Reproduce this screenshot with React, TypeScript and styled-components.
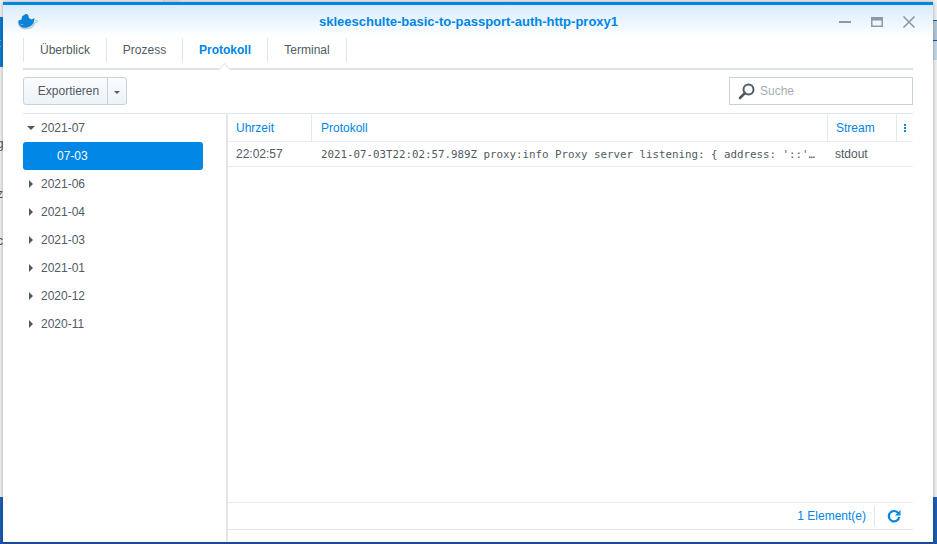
import styled, { createGlobalStyle } from "styled-components";

const GlobalStyle = createGlobalStyle`
  html, body {
    margin: 0;
    padding: 0;
    width: 937px;
    height: 544px;
    overflow: hidden;
    font-family: "Liberation Sans", Arial, sans-serif;
  }
`;

const Desktop = styled.div`
  width: 937px;
  height: 544px;
  box-sizing: border-box;
  padding: 2px 4px 2px 3px;
  position: relative;
  overflow: hidden;
  background:
    linear-gradient(#0a7bd2, #0a7bd2) 0 17px / 3px 50px no-repeat,
    linear-gradient(#1e5f9e 0 1px, #b4c8d8 1px 20px, #164f8a 20px 21px, #c4d8e6 21px 40px) 933px 20px / 4px 40px no-repeat,
    linear-gradient(#d8d8d8, #d8d8d8) 163px 0 / 1px 2px no-repeat,
    linear-gradient(#e8e8e8, #e8e8e8) 164px 0 / 16px 2px no-repeat,
    linear-gradient(#f1f1f1 0, #f1f1f1 497px, #1c5fbb 497px, #1c5cb4 541px, #1a54a4 541px);
`;

const BehindLetter = styled.span<{ $top: number; $light?: boolean }>`
  position: absolute;
  left: -3px;
  top: ${(p) => p.$top}px;
  font-size: 12px;
  color: ${(p) => (p.$light ? "#fff" : "#555")};
`;

const Window = styled.div`
  width: 930px;
  height: 540px;
  box-sizing: border-box;
  border-top: 3px solid #0086e5;
  background: #fff;
  display: flex;
  flex-direction: column;
  position: relative;
  box-shadow: 0 0 4px rgba(0, 0, 0, 0.35);
`;

const TitleBar = styled.div`
  height: 33px;
  flex: none;
  display: flex;
  align-items: center;
  padding: 0 17px 0 13px;
  background: linear-gradient(#d9ecfc, #ffffff);
`;

const TitleLogo = styled.svg`
  width: 23px;
  height: 19px;
  flex: none;
`;

const Title = styled.div`
  flex: 1;
  text-align: center;
  font-size: 13px;
  font-weight: 700;
  color: #0086e5;
  padding-left: 60px;
`;

const WindowButtons = styled.div`
  display: flex;
  align-items: center;
  gap: 18px;
`;

const WindowButton = styled.svg`
  width: 14px;
  height: 14px;
  display: block;
`;

const Content = styled.div`
  flex: 1;
  min-height: 0;
  display: flex;
  flex-direction: column;
  padding: 0 20px;
`;

const Tabs = styled.div`
  height: 30px;
  flex: none;
  display: grid;
  grid-template-columns: 84px 76px 85px 79px;
  justify-content: start;
  border-bottom: 2px solid #dfe3e6;
  position: relative;
`;

const Tab = styled.div<{ $active?: boolean }>`
  height: 24px;
  box-sizing: border-box;
  display: flex;
  align-items: center;
  justify-content: center;
  border-right: 1px solid #dde4ec;
  font-size: 12px;
  font-weight: ${(p) => (p.$active ? 700 : 400)};
  color: ${(p) => (p.$active ? "#0086e5" : "#505a64")};
  &:first-child {
    border-left: 1px solid #dde4ec;
  }
`;

const TabNotch = styled.span`
  position: absolute;
  left: 197px;
  bottom: -2px;
  width: 9px;
  height: 9px;
  box-sizing: border-box;
  background: #fff;
  border-left: 1px solid #dfe3e6;
  border-top: 1px solid #dfe3e6;
  transform: translateY(4px) rotate(45deg);
`;

const Toolbar = styled.div`
  height: 28px;
  flex: none;
  margin-top: 7px;
  display: flex;
  justify-content: space-between;
`;

const SplitButton = styled.div`
  display: flex;
  height: 28px;
  box-sizing: border-box;
  border: 1px solid #c8d3de;
  border-radius: 3px;
  background: linear-gradient(#fafcfd, #eef3f8);
`;

const ExportLabel = styled.div`
  width: 84px;
  display: flex;
  align-items: center;
  justify-content: center;
  padding-left: 6px;
  box-sizing: border-box;
  font-size: 12px;
  color: #505a64;
  border-right: 1px solid #c8d3de;
`;

const Caret = styled.div`
  width: 18px;
  display: flex;
  align-items: center;
  justify-content: center;
  &::after {
    content: "";
    margin-top: 2px;
    border-left: 3.5px solid transparent;
    border-right: 3.5px solid transparent;
    border-top: 3.5px solid #505a64;
  }
`;

const SearchBox = styled.div`
  width: 184px;
  height: 28px;
  box-sizing: border-box;
  border: 1px solid #c8d3de;
  display: flex;
  align-items: center;
  gap: 4px;
  padding-left: 8px;
  font-size: 12px;
  color: #a5adb6;
`;

const Main = styled.div`
  flex: 1;
  min-height: 0;
  margin-top: 8px;
  border-top: 1px solid #dfe6ed;
  display: flex;
`;

const Sidebar = styled.div`
  width: 205px;
  flex: none;
  box-sizing: border-box;
  border-right: 2px solid #e3e5e7;
  padding-right: 23px;
  display: flex;
  flex-direction: column;
`;

const TreeRow = styled.div<{ $selected?: boolean }>`
  height: 28px;
  display: flex;
  align-items: center;
  font-size: 12px;
  border-radius: 3px;
  box-sizing: border-box;
  padding-left: ${(p) => (p.$selected ? "34px" : "18px")};
  position: relative;
  color: ${(p) => (p.$selected ? "#fff" : "#505a64")};
  background: ${(p) => (p.$selected ? "#0086e5" : "transparent")};
`;

const Arrow = styled.span<{ $open?: boolean }>`
  position: absolute;
  left: ${(p) => (p.$open ? "4px" : "6px")};
  top: ${(p) => (p.$open ? "12px" : "10px")};
  width: 0;
  height: 0;
  ${(p) =>
    p.$open
      ? `border-left: 4px solid transparent;
         border-right: 4px solid transparent;
         border-top: 4px solid #505a64;`
      : `border-top: 4px solid transparent;
         border-bottom: 4px solid transparent;
         border-left: 4px solid #505a64;`}
`;

const Panel = styled.div`
  flex: 1;
  min-width: 0;
  display: flex;
  flex-direction: column;
`;

const Grid = styled.div`
  flex: 1;
  min-height: 0;
`;

const HeaderRow = styled.div`
  height: 28px;
  box-sizing: border-box;
  display: grid;
  grid-template-columns: 84px 516px 69px 16px;
  border-bottom: 1px solid #e8edf2;
`;

const HeaderCell = styled.div<{ $indent: number }>`
  display: flex;
  align-items: center;
  padding-left: ${(p) => p.$indent}px;
  box-sizing: border-box;
  font-size: 12px;
  color: #0086e5;
  border-right: 1px solid #e3eaf1;
  &:last-child {
    border-right: none;
  }
`;

const DotsIcon = styled.svg`
  width: 2px;
  height: 8px;
  display: block;
`;

const DataRow = styled.div`
  height: 25px;
  box-sizing: border-box;
  display: grid;
  grid-template-columns: 84px 516px 69px 16px;
  align-items: center;
  border-bottom: 1px solid #e8edf2;
  font-size: 12px;
  color: #505a64;
`;

const TimeCell = styled.div`
  padding-left: 8px;
`;

const MessageCell = styled.div`
  padding-left: 9px;
  font-family: "DejaVu Sans Mono", monospace;
  font-size: 10.8px;
  white-space: nowrap;
`;

const StreamCell = styled.div`
  padding-left: 7px;
`;

const Footer = styled.div`
  height: 28px;
  flex: none;
  margin-bottom: 12px;
  box-sizing: border-box;
  border-top: 1px solid #e8edf2;
  border-bottom: 1px solid #dfe6ed;
  display: flex;
  align-items: center;
  justify-content: flex-end;
  font-size: 12px;
  color: #0086e5;
`;

const FooterDivider = styled.span`
  width: 1px;
  height: 20px;
  background: #dfe6ed;
  margin: 0 12px 0 8px;
`;

const RefreshIcon = styled.svg`
  width: 14px;
  height: 14px;
  margin-right: 12px;
  display: block;
`;

const otherMonths = ["2021-06", "2021-04", "2021-03", "2021-01", "2020-12", "2020-11"];

const App = () => {
  return (
    <>
      <GlobalStyle />
      <Desktop>
        <BehindLetter $top={36} $light>
          t
        </BehindLetter>
        <BehindLetter $top={85}>i</BehindLetter>
        <BehindLetter $top={137}>g</BehindLetter>
        <BehindLetter $top={187}>z</BehindLetter>
        <BehindLetter $top={234}>c</BehindLetter>
        <Window>
          <TitleBar>
            <TitleLogo viewBox="0 0 23 19">
              <path
                d="M2.200 9.500c0 4 3 7.300 7.500 7.300 4.800 0 8-2.600 9-6 1.300-.1 2.400-.8 3-1.800-.8-.6-2-.8-3-.5"
                fill="none"
                stroke="#c3cad0"
                strokeWidth="1.400"
              />
              <path
                d="M2.500 8.500L5.500 7.500 6 4.500 9.500 2 12 2.500 13 6 15.500 7.500 18.500 6 18 9.500C17 13.500 13 15.800 8.500 15.800 4.500 15.800 2.200 12.500 2.500 8.500z"
                fill="#0a84d8"
              />
              <circle cx="6" cy="12.500" r="0.6" fill="#fff" />
            </TitleLogo>
            <Title>skleeschulte-basic-to-passport-auth-http-proxy1</Title>
            <WindowButtons>
              <WindowButton viewBox="0 0 14 14">
                <rect x="1" y="6" width="12" height="2" fill="#8c99a6" />
              </WindowButton>
              <WindowButton viewBox="0 0 14 14">
                <path d="M1 2h12v10H1zM2.500 5.500v5h9v-5z" fill="#8c99a6" fillRule="evenodd" />
              </WindowButton>
              <WindowButton viewBox="0 0 14 14">
                <path d="M1.500 1.500l11 11M12.500 1.500l-11 11" stroke="#8c99a6" strokeWidth="1.600" fill="none" />
              </WindowButton>
            </WindowButtons>
          </TitleBar>
          <Content>
            <Tabs>
              <Tab>Überblick</Tab>
              <Tab>Prozess</Tab>
              <Tab $active>Protokoll</Tab>
              <Tab>Terminal</Tab>
              <TabNotch />
            </Tabs>
            <Toolbar>
              <SplitButton>
                <ExportLabel>Exportieren</ExportLabel>
                <Caret />
              </SplitButton>
              <SearchBox>
                <svg width="18" height="18" viewBox="0 0 18 18">
                  <circle cx="10.500" cy="7.500" r="5" fill="none" stroke="#505a64" strokeWidth="2" />
                  <path d="M7 11l-5 5" stroke="#505a64" strokeWidth="2.600" strokeLinecap="round" />
                </svg>
                Suche
              </SearchBox>
            </Toolbar>
            <Main>
              <Sidebar>
                <TreeRow>
                  <Arrow $open />
                  2021-07
                </TreeRow>
                <TreeRow $selected>07-03</TreeRow>
                {otherMonths.map((month) => (
                  <TreeRow key={month}>
                    <Arrow />
                    {month}
                  </TreeRow>
                ))}
              </Sidebar>
              <Panel>
                <Grid>
                  <HeaderRow>
                    <HeaderCell $indent={8}>Uhrzeit</HeaderCell>
                    <HeaderCell $indent={9}>Protokoll</HeaderCell>
                    <HeaderCell $indent={8}>Stream</HeaderCell>
                    <HeaderCell $indent={7}>
                      <DotsIcon viewBox="0 0 2 8">
                        <path d="M0 0h2v2H0zM0 3h2v2H0zM0 6h2v2H0z" fill="#0086e5" />
                      </DotsIcon>
                    </HeaderCell>
                  </HeaderRow>
                  <DataRow>
                    <TimeCell>22:02:57</TimeCell>
                    <MessageCell>
                      2021-07-03T22:02:57.989Z proxy:info Proxy server listening: {"{"} address: '::'…
                    </MessageCell>
                    <StreamCell>stdout</StreamCell>
                  </DataRow>
                </Grid>
                <Footer>
                  1 Element(e)
                  <FooterDivider />
                  <RefreshIcon viewBox="0 0 14 14">
                    <path
                      d="M11.300 4.200A5.200 5.200 0 1 0 12.200 8"
                      fill="none"
                      stroke="#0086e5"
                      strokeWidth="2.200"
                    />
                    <path d="M13.500 1v5.500H8z" fill="#0086e5" />
                  </RefreshIcon>
                </Footer>
              </Panel>
            </Main>
          </Content>
        </Window>
      </Desktop>
    </>
  );
};

export default App;
